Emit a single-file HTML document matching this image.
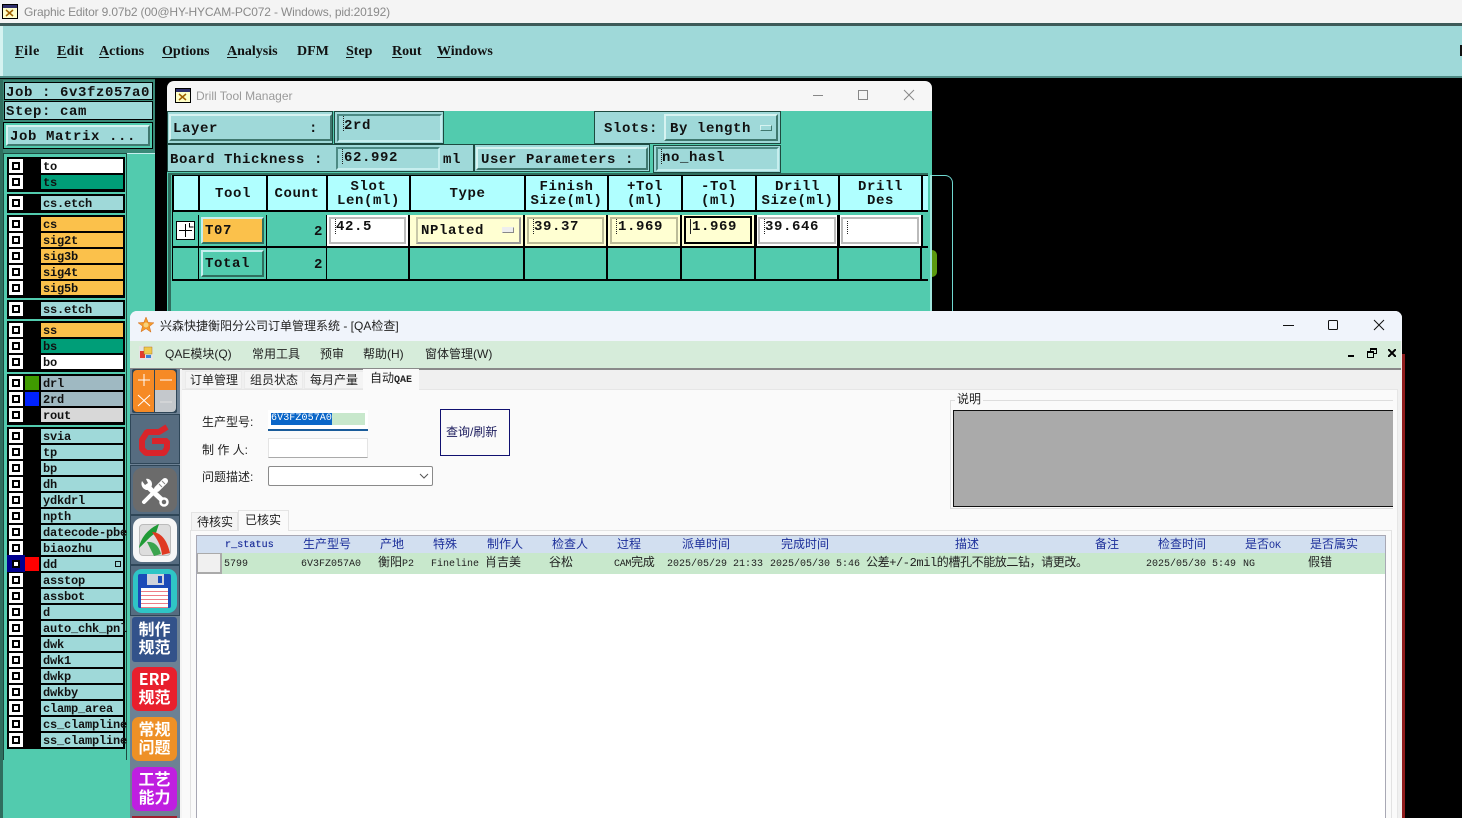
<!DOCTYPE html>
<html><head><meta charset="utf-8">
<style>
html,body{margin:0;padding:0;background:#000}
#r{position:relative;width:1462px;height:818px;overflow:hidden;background:#000;font-family:"Liberation Sans","Noto Sans CJK SC",sans-serif}
#r div,#r svg{position:absolute}
.t{white-space:nowrap;color:#000}
.m{font-family:"Liberation Mono","Noto Sans CJK SC",monospace;font-weight:bold;font-size:14px;letter-spacing:.6px;line-height:16px;white-space:nowrap;color:#111}
.s{font-family:"Liberation Serif",serif;font-weight:bold;font-size:14px;line-height:16px;white-space:nowrap;color:#111}
.s u{text-underline-offset:2px}
.b{box-sizing:border-box;border:2px solid;border-color:#d6f3f1 #40786f #40786f #d6f3f1}
.i{box-sizing:border-box;border:2px solid;border-color:#4d8a84 #c6eeee #c6eeee #4d8a84;background:#9fd9d9}
.lb{left:41px;width:82px;height:14px;background:#9fd9d9;font:bold 12px/16px "Liberation Mono",monospace;letter-spacing:-.2px;color:#111;overflow:hidden;white-space:nowrap;padding-left:2px;box-sizing:border-box}
.cb{left:9px;width:14px;height:14px;box-sizing:border-box;background:#fff}
.cb:after{content:"";position:absolute;left:3px;top:3px;width:8px;height:8px;box-sizing:border-box;border:2px solid #000;background:#fff}
.g{left:7px;width:118px;background:#000}
.h{background:#b0ffff;text-align:center;font:bold 14px/14px "Liberation Mono",monospace;letter-spacing:.6px;padding-top:1px;color:#111;box-sizing:border-box;display:flex;align-items:center;justify-content:center}
.c{background:#52cbae}
.n{font:bold 14px/14px "Liberation Mono",monospace;letter-spacing:.6px;color:#111;white-space:nowrap}
.q{font-family:"Liberation Sans","Noto Sans CJK SC",sans-serif;font-size:12px;line-height:16px;white-space:nowrap;color:#222}
.gh{font-family:"Noto Sans CJK SC",sans-serif;font-size:12px;line-height:16px;color:#1c2f9a;white-space:nowrap;top:536px}
.gd{font-family:"Liberation Mono","Noto Sans CJK SC",monospace;font-size:10px;line-height:16px;color:#222;white-space:nowrap;top:557px}
.tile{left:133px;width:44px;border-radius:6px;color:#fff;text-align:center;font:bold 16px/18px "Noto Sans CJK SC",sans-serif;box-sizing:border-box;padding-top:2px}
</style></head><body><div id="r">

<!-- top title -->
<div style="left:0;top:0;width:1462px;height:23px;background:#f4f4f4"></div>
<svg style="left:2px;top:4px" width="16" height="15" viewBox="0 0 16 15"><rect x=".5" y=".5" width="15" height="14" fill="#ffffc8" stroke="#000"/><rect x="1" y="1" width="14" height="3" fill="#30306a"/><path d="M4 6l7 6M11 6l-7 6" stroke="#a06000" stroke-width="1.5"/></svg>
<div class="t" style="left:24px;top:4px;font-size:12px;letter-spacing:-.16px;line-height:16px;color:#8a8a8a">Graphic Editor 9.07b2 (00@HY-HYCAM-PC072 - Windows, pid:20192)</div>

<!-- menu -->
<div style="left:0;top:23px;width:1462px;height:3px;background:#3d5a58"></div>
<div style="left:0;top:26px;width:1462px;height:50px;background:#9fd9d9;border-left:3px solid #d6f3f1;box-sizing:border-box"></div>
<div style="left:0;top:76px;width:1462px;height:2px;background:#4d8a84"></div>
<div class="s" style="left:15px;top:44px;letter-spacing:.6px"><u>F</u>ile</div>
<div class="s" style="left:57px;top:44px;letter-spacing:.3px"><u>E</u>dit</div>
<div class="s" style="left:99px;top:44px"><u>A</u>ctions</div>
<div class="s" style="left:162px;top:44px"><u>O</u>ptions</div>
<div class="s" style="left:227px;top:44px"><u>A</u>nalysis</div>
<div class="s" style="left:297px;top:44px">DFM</div>
<div class="s" style="left:346px;top:44px"><u>S</u>tep</div>
<div class="s" style="left:392px;top:44px"><u>R</u>out</div>
<div class="s" style="left:437px;top:44px"><u>W</u>indows</div>
<div style="left:1460px;top:45px;width:2px;height:11px;background:#111"></div>

<!-- left panel -->
<div style="left:0;top:79px;width:155px;height:739px;background:#2f6e5e"></div>
<div style="left:3px;top:80px;width:152px;height:738px;background:#52cbae"></div>
<div style="left:3px;top:80px;width:152px;height:73px;background:#3a8a78"></div>
<div style="left:4px;top:82px;width:149px;height:18px;background:#9fd9d9;border:1px solid #000;box-sizing:border-box"></div>
<div class="m" style="left:6px;top:85px">Job : 6v3fz057a0</div>
<div style="left:4px;top:101px;width:149px;height:19px;background:#9fd9d9;border:1px solid #000;box-sizing:border-box"></div>
<div class="m" style="left:6px;top:104px">Step: cam</div>
<div style="left:3px;top:122px;width:150px;height:27px;background:#52cbae;border:1px solid #000;box-sizing:border-box"></div>
<div class="b" style="left:6px;top:125px;width:144px;height:21px;background:#9fd9d9"></div>
<div class="m" style="left:10px;top:129px">Job Matrix ...</div>
<div style="left:3px;top:153px;width:124px;height:608px;background:#52cbae;border:1px solid #1d4a40;box-sizing:border-box"></div>
<div style="left:127px;top:153px;width:28px;height:665px;background:#52cbae;border-top:1px solid #c6eeee;box-sizing:border-box"></div>
<div style="left:3px;top:760px;width:127px;height:58px;background:#52cbae"></div>

<div class="g" style="top:157px;height:35px"></div>
<div class="g" style="top:194px;height:19px"></div>
<div class="g" style="top:215px;height:83px"></div>
<div class="g" style="top:300px;height:19px"></div>
<div class="g" style="top:321px;height:51px"></div>
<div class="g" style="top:374px;height:51px"></div>
<div class="g" style="top:427px;height:322px"></div>

<div class="cb" style="top:159px"></div><div class="lb" style="top:159px;background:#fff">to</div>
<div class="cb" style="top:175px"></div><div class="lb" style="top:175px;background:#009e78">ts</div>
<div class="cb" style="top:196px"></div><div class="lb" style="top:196px">cs.etch</div>
<div class="cb" style="top:217px"></div><div class="lb" style="top:217px;background:#fbc14b">cs</div>
<div class="cb" style="top:233px"></div><div class="lb" style="top:233px;background:#fbc14b">sig2t</div>
<div class="cb" style="top:249px"></div><div class="lb" style="top:249px;background:#fbc14b">sig3b</div>
<div class="cb" style="top:265px"></div><div class="lb" style="top:265px;background:#fbc14b">sig4t</div>
<div class="cb" style="top:281px"></div><div class="lb" style="top:281px;background:#fbc14b">sig5b</div>
<div class="cb" style="top:302px"></div><div class="lb" style="top:302px">ss.etch</div>
<div class="cb" style="top:323px"></div><div class="lb" style="top:323px;background:#fbc14b">ss</div>
<div class="cb" style="top:339px"></div><div class="lb" style="top:339px;background:#009e78">bs</div>
<div class="cb" style="top:355px"></div><div class="lb" style="top:355px;background:#fff">bo</div>
<div class="cb" style="top:376px"></div><div style="left:25px;top:376px;width:14px;height:14px;background:#3f9a00"></div><div class="lb" style="top:376px;background:#9fb9c2">drl</div>
<div class="cb" style="top:392px"></div><div style="left:25px;top:392px;width:14px;height:14px;background:#0022ff"></div><div class="lb" style="top:392px;background:#9fb9c2">2rd</div>
<div class="cb" style="top:408px"></div><div class="lb" style="top:408px;background:#d8d8d8">rout</div>
<div class="cb" style="top:429px"></div><div class="lb" style="top:429px">svia</div>
<div class="cb" style="top:445px"></div><div class="lb" style="top:445px">tp</div>
<div class="cb" style="top:461px"></div><div class="lb" style="top:461px">bp</div>
<div class="cb" style="top:477px"></div><div class="lb" style="top:477px">dh</div>
<div class="cb" style="top:493px"></div><div class="lb" style="top:493px">ydkdrl</div>
<div class="cb" style="top:509px"></div><div class="lb" style="top:509px">npth</div>
<div class="cb" style="top:525px"></div><div class="lb" style="top:525px;overflow:visible">datecode-pbe</div>
<div class="cb" style="top:541px"></div><div class="lb" style="top:541px">biaozhu</div>
<div style="left:7px;top:555px;width:18px;height:17px;background:#000090"></div>
<div class="cb" style="top:557px;background:#000090"></div><div style="left:25px;top:557px;width:14px;height:14px;background:#ff0000"></div><div class="lb" style="top:557px">dd</div>
<div style="left:115px;top:561px;width:6px;height:6px;border:1px solid #111;box-sizing:border-box"></div>
<div class="cb" style="top:573px"></div><div class="lb" style="top:573px">asstop</div>
<div class="cb" style="top:589px"></div><div class="lb" style="top:589px">assbot</div>
<div class="cb" style="top:605px"></div><div class="lb" style="top:605px">d</div>
<div class="cb" style="top:621px"></div><div class="lb" style="top:621px;overflow:visible">auto_chk_pnl</div>
<div class="cb" style="top:637px"></div><div class="lb" style="top:637px">dwk</div>
<div class="cb" style="top:653px"></div><div class="lb" style="top:653px">dwk1</div>
<div class="cb" style="top:669px"></div><div class="lb" style="top:669px">dwkp</div>
<div class="cb" style="top:685px"></div><div class="lb" style="top:685px">dwkby</div>
<div class="cb" style="top:701px"></div><div class="lb" style="top:701px">clamp_area</div>
<div class="cb" style="top:717px"></div><div class="lb" style="top:717px;overflow:visible">cs_clampline</div>
<div class="cb" style="top:733px"></div><div class="lb" style="top:733px;overflow:visible">ss_clampline</div>

<!-- drill tool manager -->
<div style="left:167px;top:81px;width:765px;height:31px;background:#f6f6f6;border-radius:7px 7px 0 0"></div>
<svg style="left:175px;top:88px" width="16" height="15" viewBox="0 0 16 15"><rect x=".5" y=".5" width="15" height="14" fill="#ffffc8" stroke="#000"/><rect x="1" y="1" width="14" height="3" fill="#30306a"/><path d="M4 6l7 6M11 6l-7 6" stroke="#a06000" stroke-width="1.5"/></svg>
<div class="t" style="left:196px;top:88px;font-size:12px;line-height:16px;color:#9a9a9a">Drill Tool Manager</div>
<svg style="left:810px;top:88px" width="110" height="14" viewBox="0 0 110 14" fill="none" stroke="#888"><path d="M3 7.5h10"/><rect x="48.5" y="2.5" width="9" height="9"/><path d="M94 2l10 10M104 2l-10 10"/></svg>
<div style="left:167px;top:111px;width:765px;height:200px;background:#52cbae"></div>

<div style="left:167px;top:111px;width:166px;height:33px;background:#9fd9d9;border:1px solid #1d4a40;box-sizing:border-box"></div>
<div class="b" style="left:169px;top:114px;width:163px;height:27px;background:#9fd9d9"></div>
<div class="m" style="left:173px;top:121px">Layer</div><div class="m" style="left:309px;top:121px">:</div>
<div style="left:334px;top:111px;width:110px;height:33px;background:#9fd9d9;border:1px solid #1d4a40;box-sizing:border-box"></div>
<div class="i" style="left:337px;top:114px;width:105px;height:28px"></div>
<div class="m" style="left:344px;top:118px">2rd</div>
<div style="left:343px;top:116px;width:1px;height:15px;border-left:1px dotted #222"></div>

<div style="left:167px;top:144px;width:307px;height:28px;background:#9fd9d9;border:1px solid #1d4a40;box-sizing:border-box"></div>
<div class="m" style="left:170px;top:152px">Board Thickness :</div>
<div class="i" style="left:336px;top:147px;width:104px;height:23px"></div>
<div class="m" style="left:344px;top:150px">62.992</div>
<div style="left:342px;top:149px;width:1px;height:15px;border-left:1px dotted #222"></div>
<div class="m" style="left:443px;top:152px">ml</div>
<div style="left:474px;top:144px;width:176px;height:28px;background:#9fd9d9;border:1px solid #1d4a40;box-sizing:border-box"></div>
<div class="b" style="left:476px;top:147px;width:172px;height:23px;background:#9fd9d9"></div>
<div class="m" style="left:481px;top:152px">User Parameters :</div>
<div style="left:653px;top:145px;width:128px;height:28px;background:#9fd9d9;border:1px solid #1d4a40;box-sizing:border-box"></div>
<div class="i" style="left:656px;top:147px;width:123px;height:24px"></div>
<div class="m" style="left:662px;top:150px">no_hasl</div>
<div style="left:661px;top:149px;width:1px;height:15px;border-left:1px dotted #222"></div>

<div style="left:594px;top:111px;width:187px;height:33px;background:#9fd9d9;border:1px solid #1d4a40;box-sizing:border-box"></div>
<div class="m" style="left:604px;top:121px">Slots:</div>
<div class="b" style="left:664px;top:114px;width:114px;height:27px;background:#9fd9d9"></div>
<div class="m" style="left:670px;top:121px">By length</div>
<div class="b" style="left:760px;top:125px;width:12px;height:6px;background:#9fd9d9;border-width:1px"></div>

<!-- drill table -->
<div style="left:168px;top:173px;width:3px;height:138px;background:#2f6e5e"></div>
<div style="left:168px;top:173px;width:760px;height:2px;background:#2f6e5e"></div>
<div style="left:172px;top:175px;width:756px;height:106px;background:#000"></div>
<div style="left:173px;top:212px;width:755px;height:3px;background:#52cbae"></div>
<div class="h" style="left:174px;top:176px;width:24px;height:34px"></div>
<div class="h" style="left:200px;top:176px;width:66px;height:34px">Tool</div>
<div class="h" style="left:268px;top:176px;width:58px;height:34px">Count</div>
<div class="h" style="left:328px;top:176px;width:81px;height:34px">Slot<br>Len(ml)</div>
<div class="h" style="left:411px;top:176px;width:113px;height:34px">Type</div>
<div class="h" style="left:526px;top:176px;width:81px;height:34px">Finish<br>Size(ml)</div>
<div class="h" style="left:609px;top:176px;width:72px;height:34px">+Tol<br>(ml)</div>
<div class="h" style="left:683px;top:176px;width:72px;height:34px">-Tol<br>(ml)</div>
<div class="h" style="left:757px;top:176px;width:81px;height:34px">Drill<br>Size(ml)</div>
<div class="h" style="left:840px;top:176px;width:81px;height:34px">Drill<br>Des</div>
<div class="h" style="left:923px;top:176px;width:5px;height:34px"></div>

<div class="c" style="left:173px;top:215px;width:25px;height:31px"></div>
<div style="left:176px;top:221px;width:19px;height:19px;background:#fff;border:1px solid #000;box-sizing:border-box"></div>
<svg style="left:177px;top:222px" width="17" height="17"><path d="M8.5 2v13M2 8.5h13" stroke="#000"/><path d="M12.5 1v4h4" stroke="#000" fill="none"/></svg>
<div class="c" style="left:199px;top:215px;width:67px;height:31px"></div>
<div class="b" style="left:201px;top:217px;width:63px;height:27px;background:#fbc14b;border-color:#c6eeee #2f6e5e #2f6e5e #c6eeee"></div>
<div class="n" style="left:205px;top:224px">T07</div>
<div class="c" style="left:267px;top:215px;width:59px;height:31px"></div>
<div class="n" style="left:314px;top:225px">2</div>
<div style="left:327px;top:215px;width:81px;height:31px;background:#fff"></div>
<div style="left:329px;top:217px;width:77px;height:27px;box-sizing:border-box;border:2px solid #bbb;background:#fff"></div>
<div class="n" style="left:336px;top:220px">42.5</div>
<div style="left:335px;top:219px;width:1px;height:15px;border-left:1px dotted #222"></div>
<div style="left:410px;top:215px;width:113px;height:31px;background:#ffffd2"></div>
<div class="b" style="left:416px;top:217px;width:105px;height:27px;background:#ffffd2;border-color:#c8c8a8 #999 #999 #c8c8a8"></div>
<div class="n" style="left:421px;top:224px">NPlated</div>
<div class="b" style="left:502px;top:227px;width:12px;height:6px;background:#eee;border-width:1px;border-color:#eee #888 #888 #eee"></div>
<div style="left:525px;top:215px;width:81px;height:31px;background:#ffffd2"></div>
<div style="left:527px;top:217px;width:77px;height:27px;box-sizing:border-box;border:2px solid #bcbc98"></div>
<div class="n" style="left:534px;top:220px">39.37</div>
<div style="left:533px;top:219px;width:1px;height:15px;border-left:1px dotted #222"></div>
<div style="left:608px;top:215px;width:72px;height:31px;background:#ffffd2"></div>
<div style="left:610px;top:217px;width:68px;height:27px;box-sizing:border-box;border:2px solid #bcbc98"></div>
<div class="n" style="left:618px;top:220px">1.969</div>
<div style="left:616px;top:219px;width:1px;height:15px;border-left:1px dotted #222"></div>
<div style="left:682px;top:215px;width:72px;height:31px;background:#ffffd2"></div>
<div style="left:684px;top:216px;width:68px;height:28px;box-sizing:border-box;border:2px solid #000"></div>
<div class="n" style="left:692px;top:220px">1.969</div>
<div style="left:690px;top:219px;width:1px;height:15px;background:#222"></div>
<div style="left:757px;top:215px;width:80px;height:31px;background:#fff"></div>
<div style="left:758px;top:217px;width:78px;height:27px;box-sizing:border-box;border:2px solid #bbb"></div>
<div class="n" style="left:765px;top:220px">39.646</div>
<div style="left:764px;top:219px;width:1px;height:15px;border-left:1px dotted #222"></div>
<div style="left:840px;top:215px;width:81px;height:31px;background:#fff"></div>
<div style="left:841px;top:217px;width:78px;height:27px;box-sizing:border-box;border:2px solid #bbb"></div>
<div style="left:847px;top:221px;width:1px;height:13px;border-left:1px dotted #222"></div>
<div class="c" style="left:923px;top:215px;width:5px;height:31px"></div>

<div class="c" style="left:173px;top:248px;width:25px;height:31px"></div>
<div class="c" style="left:199px;top:248px;width:67px;height:31px"></div>
<div class="b" style="left:201px;top:250px;width:63px;height:27px;background:#52cbae;border-color:#c6eeee #2f6e5e #2f6e5e #c6eeee"></div>
<div class="n" style="left:205px;top:257px">Total</div>
<div class="c" style="left:267px;top:248px;width:59px;height:31px"></div>
<div class="n" style="left:314px;top:258px">2</div>
<div class="c" style="left:327px;top:248px;width:81px;height:31px"></div>
<div class="c" style="left:410px;top:248px;width:113px;height:31px"></div>
<div class="c" style="left:525px;top:248px;width:81px;height:31px"></div>
<div class="c" style="left:608px;top:248px;width:72px;height:31px"></div>
<div class="c" style="left:682px;top:248px;width:72px;height:31px"></div>
<div class="c" style="left:756px;top:248px;width:81px;height:31px"></div>
<div class="c" style="left:839px;top:248px;width:81px;height:31px"></div>
<div class="c" style="left:922px;top:248px;width:6px;height:31px"></div>
<div style="left:930px;top:175px;width:23px;height:140px;box-sizing:border-box;border:1px solid #6fd8d0;border-bottom:0;border-radius:0 8px 0 0;background:#000"></div>
<div style="left:930px;top:175px;width:2px;height:136px;background:#9fe6dc"></div>
<div style="left:932px;top:250px;width:5px;height:27px;background:#5a9a10;border-radius:0 5px 5px 0"></div>

<!-- QA window -->
<div style="left:1402px;top:354px;width:3px;height:464px;background:#8f1d1d"></div>
<div style="left:130px;top:311px;width:1272px;height:507px;background:#f0f0f0;border-radius:7px 7px 0 0;overflow:hidden"></div>
<div style="left:130px;top:311px;width:1272px;height:30px;background:#f0f4fb;border-radius:7px 7px 0 0"></div>
<svg style="left:138px;top:317px" width="16" height="16" viewBox="0 0 16 16"><path d="M8 0l2.2 5.4 5.8.4-4.5 3.7 1.5 5.7L8 11.7l-5 3.1 1.5-5.7L0 5.8l5.8-.4z" fill="#f39a2c" stroke="#d06a1a" stroke-width=".5"/><circle cx="8" cy="8" r="2.5" fill="#f8d27a"/></svg>
<div class="q" style="left:160px;top:318px">兴森快捷衡阳分公司订单管理系统 - [QA检查]</div>
<svg style="left:1280px;top:318px" width="110" height="14" viewBox="0 0 110 14" fill="none" stroke="#111"><path d="M3 7.5h11"/><rect x="48.5" y="2.5" width="9" height="9" rx="1"/><path d="M94 2l10 10M104 2l-10 10"/></svg>

<div style="left:130px;top:341px;width:1271px;height:27px;background:#d6ecda"></div>
<div style="left:130px;top:368px;width:1271px;height:2px;background:#8a8a8a"></div>
<svg style="left:139px;top:346px" width="14" height="14" viewBox="0 0 14 14"><rect width="14" height="14" fill="#e4e4e4"/><rect x="1" y="5" width="5" height="7" fill="#e23b2e"/><rect x="5" y="1" width="8" height="7" fill="#f2c94c" stroke="#a08020" stroke-width=".5"/><rect x="7" y="9" width="5" height="3" fill="#3b82d6"/></svg>
<div class="q" style="left:165px;top:346px">QAE模块(Q)</div>
<div class="q" style="left:252px;top:346px">常用工具</div>
<div class="q" style="left:320px;top:346px">预审</div>
<div class="q" style="left:363px;top:346px">帮助(H)</div>
<div class="q" style="left:425px;top:346px">窗体管理(W)</div>
<div style="left:1348px;top:355px;width:6px;height:2px;background:#000"></div>
<svg style="left:1367px;top:348px" width="10" height="10" fill="none" stroke="#000"><rect x="3.5" y=".5" width="6" height="5"/><rect x=".5" y="3.5" width="6" height="6" fill="#d6ecda"/><path d="M1 4.5h5M4 1.5h5"/></svg>
<svg style="left:1388px;top:349px" width="8" height="8" stroke="#000" stroke-width="2"><path d="M0 0l8 8M8 0l-8 8"/></svg>

<!-- left toolbar -->
<div style="left:130px;top:369px;width:52px;height:449px;background:#f4f4f4"></div>
<div style="left:130px;top:369px;width:50px;height:449px;background:#6d8194"></div>
<div style="left:132px;top:369px;width:45px;height:44px;background:#2f4658;border-radius:2px"></div>
<div style="left:133px;top:370px;width:21px;height:42px;background:#f68a25;border-radius:4px 0 0 4px"></div>
<div style="left:155px;top:370px;width:21px;height:20px;background:#f68a25;border-radius:0 4px 0 0"></div>
<div style="left:155px;top:390px;width:21px;height:22px;background:#c4c8cc;border-radius:0 0 4px 0"></div>
<svg style="left:133px;top:369px" width="44" height="43" stroke="#fff" fill="none"><path d="M11 5v12M5 11h12M5 26l12 11M17 26L5 37"/><path d="M27 11h12"/><path d="M27 33h12" stroke="#e0e0e0"/></svg>

<div style="left:130px;top:414px;width:50px;height:50px;background:#566c80;border:1px solid #2f4658;box-sizing:border-box"></div>
<div style="left:130px;top:465px;width:50px;height:50px;background:#566c80;border:1px solid #2f4658;box-sizing:border-box"></div>
<div style="left:133px;top:468px;width:44px;height:44px;background:#6b6b6b;border-radius:9px"></div>
<svg style="left:130px;top:415px" width="52" height="100" viewBox="0 0 52 100" fill="none">
<path d="M37 12L29 17H17L12 25V34L16 38H34L37 33V26H22" stroke="#d9242a" stroke-width="6" stroke-linejoin="bevel"/>
<path d="M17 71L32 85" stroke="#fff" stroke-width="5"/>
<path d="M12 66l3 4 3-2-2-4c3-1 6 2 6 5s-2 6-5 6-7-4-5-9z" fill="#fff"/>
<circle cx="34" cy="87" r="3.5" stroke="#fff" stroke-width="2.5" fill="#6b6b6b"/>
<path d="M14 87L26 75" stroke="#fff" stroke-width="4" stroke-linecap="round"/>
<path d="M27 74L35 66" stroke="#fff" stroke-width="6" stroke-linecap="round"/>
<path d="M29 69l3 3M32 66l3 3" stroke="#888" stroke-width="1"/>
</svg>
<div style="left:130px;top:515px;width:50px;height:50px;background:#566c80;border:1px solid #2f4658;box-sizing:border-box"></div>
<div style="left:133px;top:518px;width:44px;height:44px;background:#f6f6f6;border-radius:9px"></div>
<div style="left:139px;top:524px;width:32px;height:32px;background:#ddd;border-radius:4px;border:1px solid #bbb;box-sizing:border-box"></div>
<svg style="left:136px;top:520px" width="38" height="38" viewBox="0 0 38 38"><path d="M3 28C5 16 14 8 23 4l-3 9c-5 2-10 9-17 15z" fill="#1f9a35"/><path d="M16 12C24 12 31 19 34 33l-8 2c-1-10-5-16-10-23z" fill="#e03a22"/><path d="M11 22l7 14 7-2c-2-8-7-13-14-12z" fill="#1f9a35" opacity=".85"/></svg>
<div style="left:130px;top:565px;width:50px;height:51px;background:#566c80;border:1px solid #2f4658;box-sizing:border-box"></div>
<div style="left:133px;top:569px;width:44px;height:44px;background:#2fc5c5;border-radius:9px"></div>
<div style="left:138px;top:574px;width:33px;height:34px;background:#1c4bb8;border-radius:2px"></div>
<div style="left:147px;top:574px;width:17px;height:11px;background:#d0d4dc"></div>
<div style="left:158px;top:576px;width:4px;height:7px;background:#1c4bb8"></div>
<div style="left:141px;top:588px;width:27px;height:20px;background:repeating-linear-gradient(#fff 0 3px,#ee7c86 3px 4px)"></div>

<div style="left:130px;top:616px;width:50px;height:202px;background:#6d8194"></div>
<div class="tile" style="left:132px;top:617px;width:45px;height:45px;background:#33528a;border-radius:3px">制作<br>规范</div>
<div class="tile" style="left:132px;top:667px;width:45px;height:44px;background:#e81f2d;border-radius:7px">ERP<br>规范</div>
<div class="tile" style="left:132px;top:717px;width:45px;height:44px;background:#ee9026;border-radius:7px">常规<br>问题</div>
<div class="tile" style="left:132px;top:767px;width:45px;height:44px;background:#bf1fe0;border-radius:7px">工艺<br>能力</div>
<div style="left:132px;top:816px;width:45px;height:2px;background:#a02030"></div>

<!-- tabs -->
<div style="left:182px;top:389px;width:1216px;height:429px;background:#fafafa;border:1px solid #e6e6e6;border-width:1px 1px 0 0;box-sizing:border-box"></div>
<div style="left:185px;top:371px;width:57px;height:18px;background:#f4f4f4;border:1px solid #eaeaea;box-sizing:border-box"></div>
<div style="left:244px;top:371px;width:59px;height:18px;background:#f4f4f4;border:1px solid #eaeaea;box-sizing:border-box"></div>
<div style="left:304px;top:371px;width:60px;height:18px;background:#f4f4f4;border:1px solid #eaeaea;box-sizing:border-box"></div>
<div style="left:363px;top:369px;width:56px;height:21px;background:#fafafa"></div>
<div class="q" style="left:190px;top:372px">订单管理</div>
<div class="q" style="left:250px;top:372px">组员状态</div>
<div class="q" style="left:310px;top:372px">每月产量</div>
<div class="q" style="left:370px;top:370px">自动<span style="font:bold 10px 'Liberation Mono'">QAE</span></div>

<!-- form -->
<div class="q" style="left:202px;top:414px">生产型号:</div>
<div class="q" style="left:202px;top:442px">制 作 人:</div>
<div class="q" style="left:202px;top:469px">问题描述:</div>
<div style="left:268px;top:410px;width:100px;height:21px;background:#fff;border-bottom:2px solid #1a5c9a;box-sizing:border-box"></div>
<div style="left:271px;top:413px;width:94px;height:12px;background:#c8e8cc"></div>
<div style="left:271px;top:413px;width:61px;height:12px;background:#0a66c8"></div>
<div style="left:271px;top:413px;font:10px/12px 'Liberation Mono',monospace;color:#fff;white-space:nowrap;letter-spacing:.1px">6V3FZ057A0</div>
<div style="left:268px;top:438px;width:100px;height:20px;background:#fff;border:1px solid #e4e4e4;border-bottom-color:#aaa;box-sizing:border-box"></div>
<div style="left:268px;top:466px;width:165px;height:20px;background:#fff;border:1px solid #8a8a8a;border-radius:2px;box-sizing:border-box"></div>
<svg style="left:419px;top:473px" width="10" height="7" fill="none" stroke="#555"><path d="M1 1l4 4 4-4"/></svg>
<div style="left:440px;top:409px;width:70px;height:47px;background:#fafafa;border:1px solid #101070;box-sizing:border-box"></div>
<div class="q" style="left:446px;top:424px;color:#1a1a5c">查询/刷新</div>

<!-- group -->
<div style="left:950px;top:400px;width:443px;height:109px;box-sizing:border-box;border:1px solid #ddd;border-right:0"></div>
<div class="q" style="left:955px;top:391px;background:#fafafa;padding:0 2px;color:#222">说明</div>
<div style="left:953px;top:410px;width:440px;height:97px;background:#aaa;border:1px solid #111;border-right:0;box-sizing:border-box"></div>

<!-- subtabs -->
<div style="left:190px;top:530px;width:1202px;height:288px;background:#fafafa;border-top:1px solid #e2e2e2;border-right:1px solid #e2e2e2;border-left:1px solid #e2e2e2;box-sizing:border-box"></div>
<div style="left:191px;top:512px;width:47px;height:19px;background:#f4f4f4;border:1px solid #e4e4e4;box-sizing:border-box"></div>
<div style="left:238px;top:510px;width:51px;height:21px;background:#fafafa;border:1px solid #e4e4e4;border-bottom:0;box-sizing:border-box"></div>
<div class="q" style="left:197px;top:514px">待核实</div>
<div class="q" style="left:245px;top:512px">已核实</div>

<!-- grid -->
<div style="left:196px;top:535px;width:1190px;height:283px;background:#fff;border:1px solid #a8a8b4;border-bottom:0;box-sizing:border-box"></div>
<div style="left:197px;top:536px;width:1188px;height:17px;background:#d2dff0"></div>
<div style="left:197px;top:553px;width:1188px;height:21px;background:#c8e8cc"></div>
<div style="left:197px;top:553px;width:25px;height:21px;background:#f0f0f0;border:1px solid #aaa;border-width:1px 2px 2px 1px;box-sizing:border-box"></div>
<div class="gh" style="left:225px;top:538px;font:10px/16px 'Liberation Mono',monospace;letter-spacing:.1px;-webkit-text-stroke:.2px #1c2f9a">r_status</div>
<div class="gh" style="left:303px">生产型号</div>
<div class="gh" style="left:380px">产地</div>
<div class="gh" style="left:433px">特殊</div>
<div class="gh" style="left:487px">制作人</div>
<div class="gh" style="left:552px">检查人</div>
<div class="gh" style="left:617px">过程</div>
<div class="gh" style="left:682px">派单时间</div>
<div class="gh" style="left:781px">完成时间</div>
<div class="gh" style="left:955px">描述</div>
<div class="gh" style="left:1095px">备注</div>
<div class="gh" style="left:1158px">检查时间</div>
<div class="gh" style="left:1245px">是否<span style="font:10px 'Liberation Mono',monospace">OK</span></div>
<div class="gh" style="left:1310px">是否属实</div>

<div class="gd" style="left:224px">5799</div>
<div class="gd" style="left:301px">6V3FZ057A0</div>
<div class="gd" style="left:378px;font-size:12px;top:555px">衡阳<span style="font-size:10px">P2</span></div>
<div class="gd" style="left:431px">Fineline</div>
<div class="gd" style="left:485px;font-size:12px;top:555px">肖吉美</div>
<div class="gd" style="left:549px;font-size:12px;top:555px">谷松</div>
<div class="gd" style="left:614px;font-size:12px;top:555px;letter-spacing:-.3px"><span style="font-size:10px">CAM</span>完成</div>
<div class="gd" style="left:667px">2025/05/29 21:33</div>
<div class="gd" style="left:770px">2025/05/30 5:46</div>
<div class="gd" style="left:866px;font-size:12px;top:555px;letter-spacing:-.4px">公差+/-2mil的槽孔不能放二钻，请更改。</div>
<div class="gd" style="left:1146px">2025/05/30 5:49</div>
<div class="gd" style="left:1243px">NG</div>
<div class="gd" style="left:1308px;font-size:12px;top:555px">假错</div>

</div></body></html>
